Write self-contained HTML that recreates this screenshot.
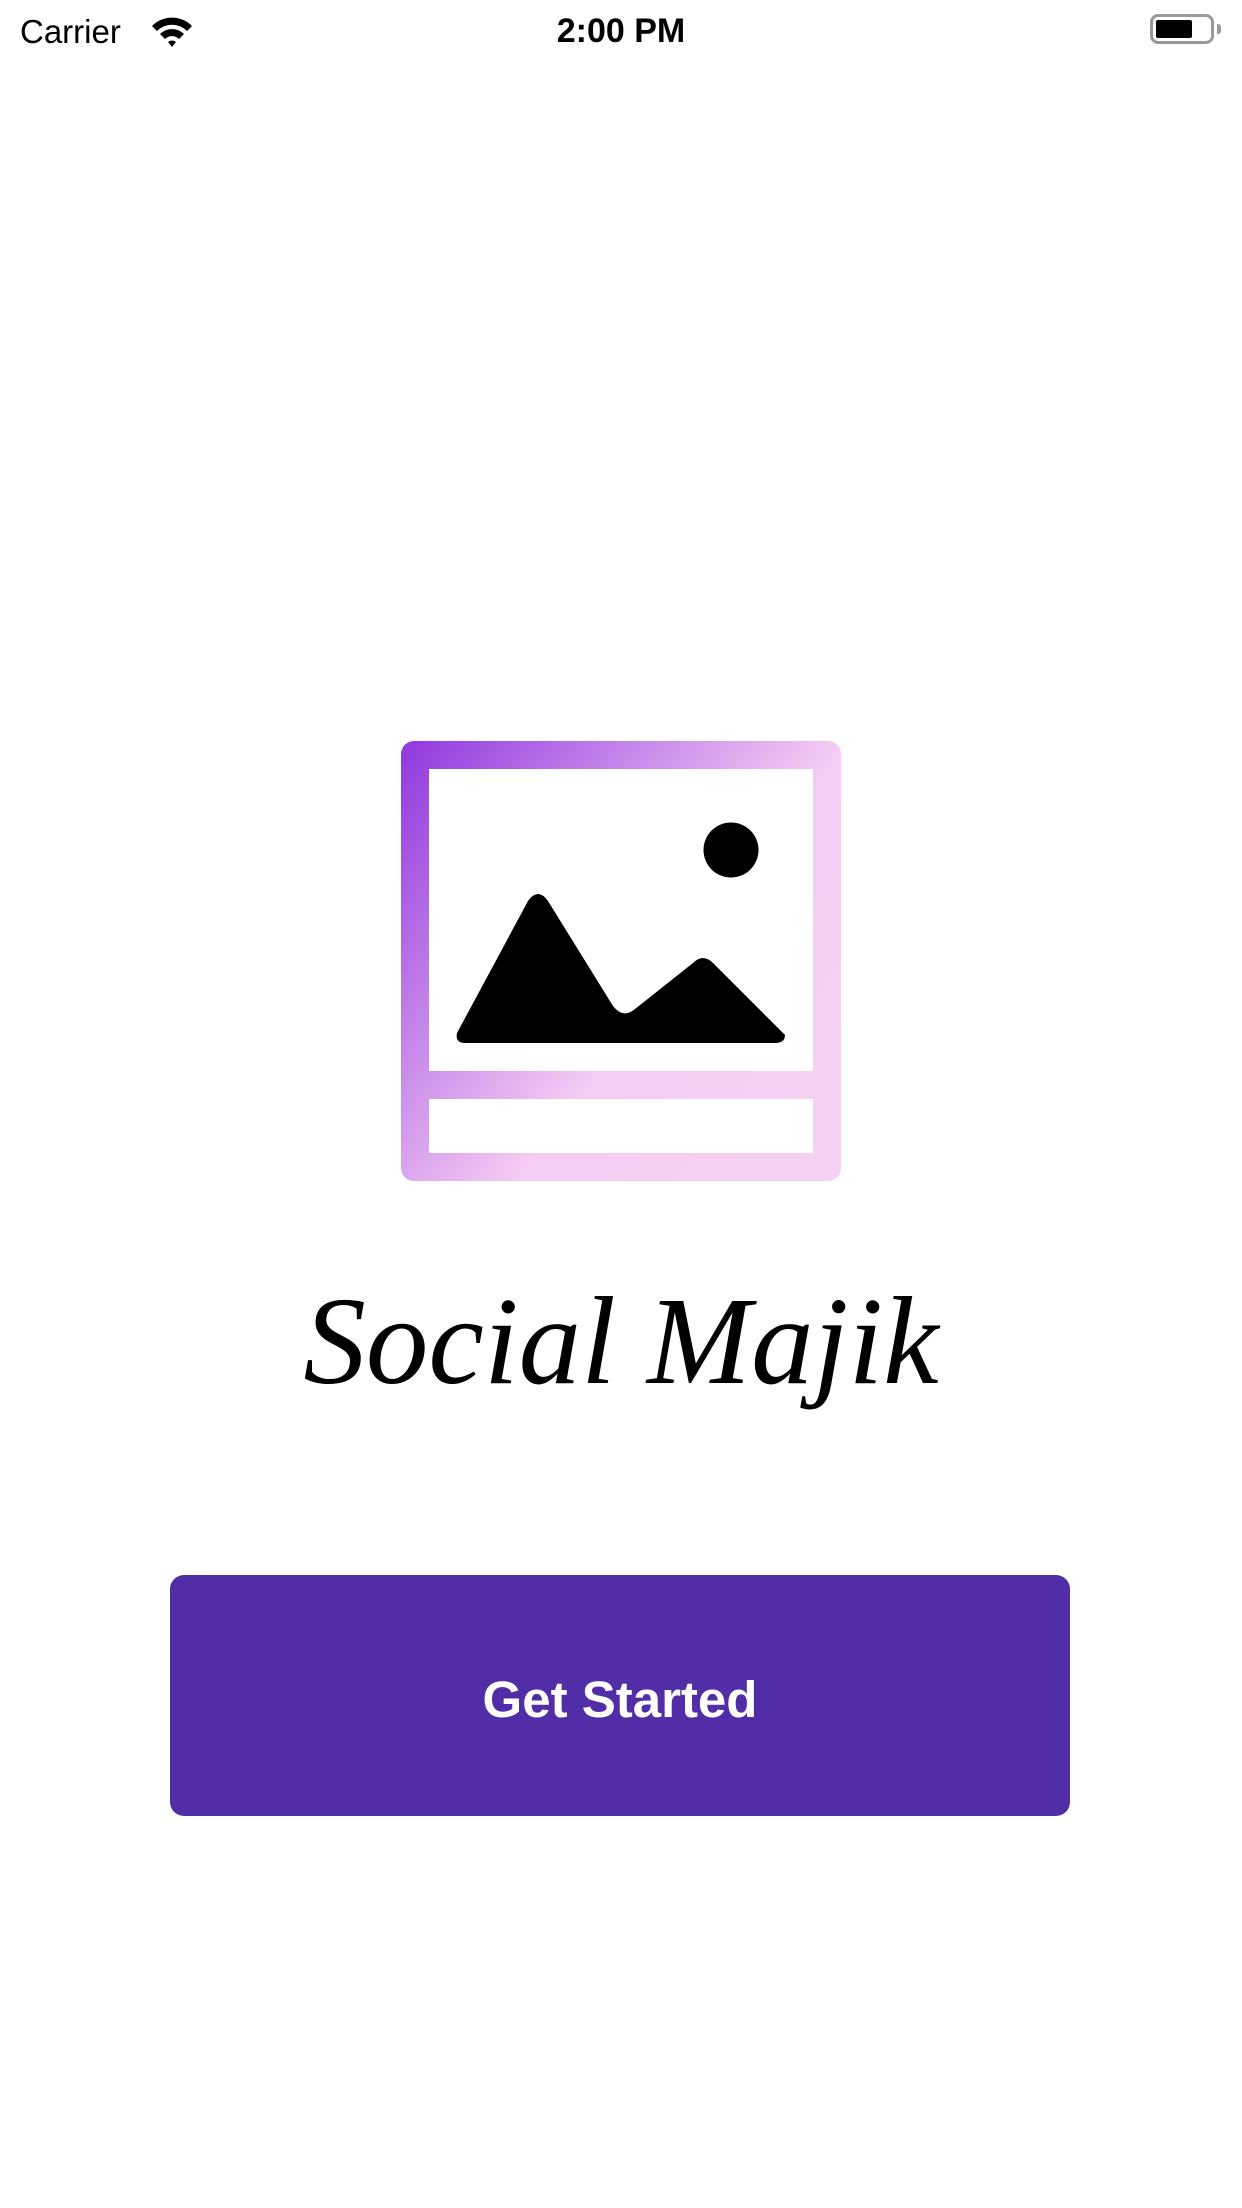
<!DOCTYPE html>
<html><head><meta charset="utf-8"><style>
html,body{margin:0;padding:0;background:#fff;width:1242px;height:2208px;overflow:hidden;font-family:"Liberation Sans",sans-serif;position:relative}
.abs{position:absolute}
</style></head><body>
<div class="abs" style="left:20px;top:13px;font-size:33px;color:#000;">Carrier</div>
<svg class="abs" style="left:150px;top:14px" width="44" height="34" viewBox="0 0 44 34"><path d="M2 12 A28 28 0 0 1 42 12 L37 17 A21 21 0 0 0 7 17Z M10 20 A17 17 0 0 1 34 20 L29 25 A10 10 0 0 0 15 25Z M18 28 A6 6 0 0 1 26 28 L22 33Z" fill="#000"/></svg>
<div class="abs" style="left:0;width:1242px;top:12px;text-align:center;font-size:34px;font-weight:bold;color:#000;">2:00 PM</div>
<div class="abs" style="left:1150px;top:14px;width:64px;height:30px;border:3px solid #999;border-radius:8px;box-sizing:border-box"></div>
<div class="abs" style="left:1156px;top:20px;width:36px;height:18px;background:#000;border-radius:2px"></div>
<div class="abs" style="left:1217px;top:24px;width:4px;height:10px;background:#999;border-radius:0 3px 3px 0"></div>

<svg class="abs" style="left:401px;top:741px" width="440" height="440" viewBox="0 0 440 440">
<defs><linearGradient id="g" x1="0" y1="0" x2="1" y2="0.75"><stop offset="0" stop-color="#9038de"/><stop offset="0.65" stop-color="#f5ccf3"/><stop offset="1" stop-color="#f6d0f2"/></linearGradient></defs>
<path fill="url(#g)" fill-rule="evenodd" d="M13 0H427A13 13 0 0 1 440 13V427A13 13 0 0 1 427 440H13A13 13 0 0 1 0 427V13A13 13 0 0 1 13 0Z M28 28V330H412V28Z M28 358V412H412V358Z"/>
<circle cx="330" cy="109" r="27.5" fill="#000"/>
<path fill="#000" d="M127 160 Q137 146 147 160 L212 265 Q222 278 234 268 L292 222 Q302 212 312 222 L384 294 Q384 302 374 302 L64 302 Q54 302 56 292 Z"/>
</svg>

<div class="abs" style="left:0;width:1242px;top:1280px;line-height:1;text-align:center;font-family:'URW Chancery L','Z003',cursive,'Liberation Serif',serif;font-style:italic;font-size:125px;color:#000;">Social Majik</div>

<div class="abs" style="left:170px;top:1575px;width:900px;height:241px;background:#512da8;border-radius:14px;color:#fff;font-size:51px;font-weight:bold;text-align:center;line-height:249px">Get Started</div>
</body></html>
